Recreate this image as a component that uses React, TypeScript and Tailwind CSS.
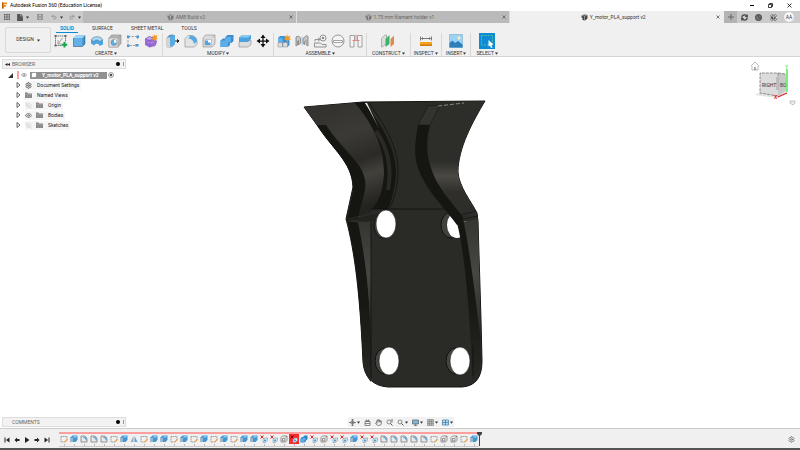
import type { ReactNode } from 'react';
import { CircleHelp, Clock, Eye, EyeOff, Hand, Redo2, RefreshCw, Settings, Undo2 } from 'lucide-react';

type Feature = 'sketch' | 'extrude' | 'fillet' | 'mirror' | 'cut' | 'failed' | 'shell' | 'combine';

const TIMELINE: Feature[] = [
  'sketch', 'extrude', 'fillet', 'fillet', 'fillet', 'sketch', 'extrude', 'mirror', 'sketch', 'extrude',
  'extrude', 'sketch', 'extrude', 'sketch', 'extrude', 'sketch', 'extrude', 'sketch', 'extrude', 'extrude',
  'cut', 'cut', 'shell', 'failed', 'combine', 'cut', 'shell', 'cut', 'cut', 'extrude',
  'cut', 'cut', 'fillet', 'fillet', 'fillet', 'fillet', 'fillet', 'sketch', 'shell', 'shell',
  'sketch', 'extrude',
];

const TREE = [
  { label: 'Document Settings', icon: 'gear', eye: '' },
  { label: 'Named Views', icon: 'folder', eye: '' },
  { label: 'Origin', icon: 'folder', eye: 'off' },
  { label: 'Bodies', icon: 'folder', eye: 'on' },
  { label: 'Sketches', icon: 'folder', eye: 'off' },
];

const Caret = () => (
  <svg viewBox="0 0 4 4" className="size-[3px] shrink-0" fill="#333"><path d="M0 .5h4L2 3.5z" /></svg>
);

const DocIcon = ({ color }: { color: string }) => (
  <svg viewBox="0 0 14 14" className="size-[7px] shrink-0">
    <path d="M1 3l5-2 7 1v7l-5 4-5-1V8L1 7z" fill={color} />
    <path d="M2 3l5 1v8M7 4l6-2" stroke="#ddd" fill="none" />
  </svg>
);

const Svg = ({ children }: { children: ReactNode }) => (
  <svg viewBox="0 0 28 28" className="size-[14px]" fill="none" strokeLinejoin="round">{children}</svg>
);

const Cube = ({ x = 0, y = 0 }: { x?: number; y?: number }) => (
  <g transform={`translate(${x} ${y})`}>
    <path d="M2 8l5-5h18v17l-5 5H2z" fill="#3a8fd0" />
    <path d="M2 8h18v17H2z" fill="#62b0e8" />
    <path d="M2 8l5-5h18l-5 5z" fill="#a5d5f5" />
  </g>
);

const TOOLS: Record<string, ReactNode> = {
  'Create Sketch': (
    <Svg>
      <path d="M3 4h20M3 4v19M23 4v12M3 23h13" stroke="#555" strokeWidth="1.5" strokeDasharray="3 1" />
      <path d="M8 20l9-12M8 12v8h7" stroke="#888" strokeWidth="1.5" />
      <path d="M1 2h4v4H1zM21 2h4v4h-4zM1 21h4v4H1z" fill="#666" />
      <path d="M21 16v11M15.500 21.500h11" stroke="#16a34a" strokeWidth="4" />
    </Svg>
  ),
  Extrude: <Svg><Cube x={1} /><path d="M3 8v17h18l5-5V3" stroke="#555" /></Svg>,
  Revolve: (
    <Svg>
      <path d="M2 12c4-9 20-9 24 0v9l-7 3c0-6-9-6-11-1l-6-4z" fill="#4ba3e0" />
      <path d="M2 12c4-9 20-9 24 0l-7 3c-2-4-9-4-11 0z" fill="#a9d6f3" stroke="#56748a" />
    </Svg>
  ),
  Hole: (
    <Svg>
      <path d="M2 8l5-6h19v17l-6 7H2z" fill="#b8b8b8" stroke="#777" />
      <path d="M2 8h18v18H2zM20 8l6-6" fill="#e2e2e2" stroke="#888" />
      <circle cx="12" cy="17" r="6" fill="#5caee8" stroke="#777" /><path d="M12 11a6 6 0 0 1 5 7l-5-1z" fill="#fff" />
    </Svg>
  ),
  Pattern: (
    <Svg>
      <path d="M4 5h19M4 5v18h17M23 5v6" stroke="#888" strokeWidth="1.500" strokeDasharray="5 2" />
      <path d="M2 3h5v5H2zM21 3h5v5h-5zM2 21h5v5H2zM19 20h6v5h-6z" fill="#4699d5" />
    </Svg>
  ),
  'Create Form': (
    <Svg>
      <path d="M2 10l8-5 12 2 4 8-3 9-12 3-9-5z" fill="#9b6dd7" />
      <path d="M2 10l8-5 10 3-8 5zM12 13v13M3 17l10 3 12-4" fill="#c3a3ee" stroke="#7546b4" />
      <path d="M21 0l2 4 4-2-2 5 3 3-5 1-1 4-2-4-5 0 3-4-2-4 4 1z" fill="#f79a1c" />
    </Svg>
  ),
  'Press Pull': (
    <Svg>
      <path d="M2 7l6-5h8v19l-5 5H2z" fill="#4a9fdd" stroke="#666" /><path d="M2 7h9v19H2z" fill="#d5d5d5" />
      <path d="M8 7l5-5h5v18l-5 5H8z" fill="#58aae5" /><path d="M18 14h7M23 11l3 3-3 3z" stroke="#222" fill="#222" strokeWidth="2" />
    </Svg>
  ),
  Fillet: (
    <Svg>
      <path d="M2 9l6-6h6c7 0 12 5 12 12v6l-6 5H2z" fill="#e4e4e4" stroke="#777" />
      <path d="M8 9l5-6c7 0 13 5 13 12l-6 5c0-6-5-11-12-11z" fill="#55a9e4" />
    </Svg>
  ),
  Shell: (
    <Svg>
      <path d="M2 8l5-6h19v18l-6 6H2z" fill="#ddd" stroke="#777" /><path d="M6 11h13v11H6z" fill="#fff" stroke="#999" />
      <path d="M6 13h6v4h5v5H6z" fill="#4da4e2" /><path d="M20 8l6-6" stroke="#999" />
    </Svg>
  ),
  Combine: (
    <Svg>
      <path d="M1 13l5-4h5V6l4-4h12v12l-4 4h-3v4l-4 4H1z" fill="#398ecf" />
      <path d="M1 13h9V6h12v11h-6v9H1z" fill="#5aade7" />
    </Svg>
  ),
  'Offset Face': (
    <Svg>
      <path d="M2 17l6-4h18v8l-6 5H2z" fill="#ddd" stroke="#777" />
      <path d="M2 7l6-5h18v8l-6 6H2z" fill="#4ca2df" /><path d="M2 7l6-5h18l-6 5z" fill="#8cc8f0" />
    </Svg>
  ),
  'Move/Copy': (
    <Svg>
      <path d="M14 5v18M5 14h18" stroke="#111" strokeWidth="2.500" />
      <path d="M14 1l5 7H9zM14 27l5-7H9zM1 14l7-5v10zM27 14l-7-5v10z" fill="#111" />
    </Svg>
  ),
  'New Component': (
    <Svg>
      <path d="M2 8l4-4h9l10 9v9l-4 4H2z" fill="#3b91d2" />
      <path d="M2 8h9v9H2z" fill="#62b2eb" /><path d="M2 17h9v9H2zM12 17h9v9h-9z" fill="#ddd" stroke="#888" />
      <path d="M20 0l2 5 5-2-2 5 3 3-5 1-2 4-2-4-5-1 3-4-2-4 4 2z" fill="#f79a1c" />
    </Svg>
  ),
  Joint: (
    <Svg>
      <path d="M2 6l5-2 4 4v10l-4 4v-9l-2 1v8l-3 2z" fill="#c9c9c9" stroke="#777" strokeWidth="1.500" />
      <path d="M16 9l7-6 3 2v19l-4-3v-8l-3 3v5l-3-2z" fill="#c5c5c5" stroke="#777" strokeWidth="1.500" />
      <path d="M14 5v18" stroke="#5ba8dc" />
    </Svg>
  ),
  'As-built Joint': (
    <Svg>
      <path d="M3 18h12l3 3h8v5H3zM4 11h9M10 8l4 3-4 3M4 11v4" fill="#eee" stroke="#777" strokeWidth="1.500" />
      <circle cx="20" cy="8" r="6" fill="#eee" stroke="#777" strokeWidth="1.500" /><circle cx="20" cy="8" r="2" fill="#666" />
    </Svg>
  ),
  'Rigid Group': (
    <Svg>
      <circle cx="14" cy="14" r="12" fill="#f4f4f4" stroke="#777" strokeWidth="1.500" />
      <path d="M5 13h18v4H5z" fill="#fff" stroke="#888" strokeWidth="1.500" />
    </Svg>
  ),
  'Drive Joints': (
    <Svg>
      <path d="M2 3h9v9h-1v14H2zM26 3h-9v9h1v14h8z" fill="#f3f3f3" stroke="#888" strokeWidth="1.500" />
      <path d="M14 1v11M7 13h14" stroke="#e16d6d" strokeWidth="1.500" />
    </Svg>
  ),
  'Offset Plane': (
    <Svg>
      <path d="M1 9l7-7h3v17l-8 7H1z" fill="#ddd" stroke="#777" />
      <path d="M9 10l8-8v18l-8 6z" fill="#39b36b" /><path d="M19 10l7-7v17l-7 6z" fill="#e28a4d" />
    </Svg>
  ),
  Measure: (
    <Svg>
      <path d="M3 5v8M25 5v8M5 9h18M8 7l-3 2 3 2M20 7l3 2-3 2" stroke="#555" strokeWidth="1.500" />
      <path d="M2 16h24v7H2z" fill="#f6a21d" /><path d="M2 21h24v3H2z" fill="#cf7b10" />
    </Svg>
  ),
  Decal: (
    <Svg>
      <path d="M1 1h26v26H1z" fill="#9bd3f7" stroke="#6b9fc0" />
      <path d="M1 27V18l6-5 5 5 6-4 9 7v6z" fill="#2c7fb9" /><circle cx="20" cy="8" r="3" fill="#fff1a8" />
    </Svg>
  ),
  Select: (
    <svg viewBox="0 0 32 32" className="size-4">
      <path d="M0 0h32v32H0z" fill="#0d8bd4" />
      <path d="M5 5h22v19H5z" fill="none" stroke="#66cf84" strokeWidth="1.500" strokeDasharray="4 2" />
      <path d="M19 14l10 9-4 1 2 5-3 1-2-5-3 2z" fill="#fff" />
    </svg>
  ),
};

const GROUPS = [
  { label: 'CREATE', pad: 'pl-0.5 pr-1', tools: ['Create Sketch', 'Extrude', 'Revolve', 'Hole', 'Pattern', 'Create Form'] },
  { label: 'MODIFY', pad: 'px-[3px]', tools: ['Press Pull', 'Fillet', 'Shell', 'Combine', 'Offset Face', 'Move/Copy'] },
  { label: 'ASSEMBLE', pad: 'px-[3px]', tools: ['New Component', 'Joint', 'As-built Joint', 'Rigid Group', 'Drive Joints'] },
  { label: 'CONSTRUCT', pad: 'px-[5px]', tools: ['Offset Plane'] },
  { label: 'INSPECT', pad: 'px-[3px]', tools: ['Measure'] },
  { label: 'INSERT', pad: 'px-1', tools: ['Decal'] },
  { label: 'SELECT', pad: 'px-[5px]', tools: ['Select'] },
];

function FeatureIcon({ kind }: { kind: Feature }) {
  return (
    <svg viewBox="0 0 16 16" className="size-2" fill="none">
      {kind === 'sketch' && (
        <>
          <path d="M2 3h12v8M2 3v11h7" stroke="#888" strokeWidth="1.500" strokeDasharray="3 1" />
          <path d="M8 14l6-6 1 2-5 5z" fill="#f5952d" />
        </>
      )}
      {kind === 'extrude' && (
        <>
          <path d="M1 5l4-4h10v9l-4 4H1z" fill="#3f97d8" />
          <path d="M5 5l3-3h7l-3 3z" fill="#8ac7ef" /><path d="M1 6h5v8H1z" fill="#a5b4bf" />
        </>
      )}
      {kind === 'fillet' && (
        <>
          <path d="M2 2h5c4 0 7 3 7 7v5H2z" fill="#e9e9e9" stroke="#777" strokeWidth="1.500" />
          <path d="M6 3c5 0 8 3 8 8l-3-1c0-3-2-4-5-5z" fill="#59a9df" />
        </>
      )}
      {kind === 'mirror' && (
        <><path d="M7 2v12H1z" fill="#aaa" /><path d="M9 2v12h6z" fill="#4da4df" /></>
      )}
      {(kind === 'cut' || kind === 'failed') && (
        <>
          <path d="M1 1l6 6M7 1L1 7" stroke={kind === 'failed' ? '#8b0000' : '#e02828'} strokeWidth="2" />
          <path d="M6 9l3-3h6v5l-4 4H6z" fill="#d5e5ef" stroke="#6f8595" /><circle cx="10" cy="11" r="2" fill="#3c96d6" />
        </>
      )}
      {kind === 'shell' && (
        <path d="M2 5l3-3h9v9l-3 3H2zM5 7h5v5H5zM11 5l3-3" fill="#eee" stroke="#777" strokeWidth="1.500" />
      )}
      {kind === 'combine' && (
        <><path d="M1 7l3-3h2l3-3h6v7l-3 3v1l-3 3H1z" fill="#2c82c5" /><path d="M1 7h5V5h5v5H9v4H1z" fill="#5cade5" /></>
      )}
    </svg>
  );
}

function TitleBar() {
  return (
    <header className="flex h-[11px] items-center bg-white pl-0.5 text-black">
      <svg viewBox="0 0 12 14" className="mr-[3px] h-[7px] w-[5px]">
        <path d="M0 0h12v4H5v2h5v4H5v4H0z" fill="#f28c1c" /><path d="M0 0h3v14H0z" fill="#b95a0b" />
      </svg>
      <h1 className="flex-1 text-[5px] leading-none">Autodesk Fusion 360 (Education License)</h1>
      <div className="flex items-center gap-[14px] pr-2">
        <button aria-label="Minimize" className="h-px w-1 bg-black" />
        <button aria-label="Restore" className="size-[5px]">
          <svg viewBox="0 0 10 10" fill="none" stroke="#000" strokeWidth="1.500"><path d="M1 3h6v6H1zM3 3V1h6v6H7" /></svg>
        </button>
        <button aria-label="Close" className="size-[5px]">
          <svg viewBox="0 0 10 10" stroke="#000" strokeWidth="1.500"><path d="M1 1l8 8M9 1L1 9" /></svg>
        </button>
      </div>
    </header>
  );
}

function DocumentTab({ label, active }: { label: string; active?: boolean }) {
  return (
    <div className={`flex flex-1 items-center border-r pr-[3px] ${active ? 'border-[#f0f0f0] bg-[#f0f0f0] text-[#333]' : 'border-[#ddd] bg-[#bababa] text-[#666]'}`}>
      <button className="flex flex-1 items-center justify-center gap-0.5 leading-none">
        <DocIcon color={active ? '#444' : '#777'} />
        {label}
      </button>
      <button aria-label={`Close ${label}`} className="size-1">
        <svg viewBox="0 0 8 8" stroke="#555" strokeWidth="1.500"><path d="M1 1l6 6M7 1L1 7" /></svg>
      </button>
    </div>
  );
}

function TabBar() {
  return (
    <nav className="flex h-3 bg-[#cbcbcb] text-[5px] text-[#444]">
      <div className="flex w-[83px] items-center pl-1">
        <button aria-label="Data panel" className="mr-[7px]">
          <svg viewBox="0 0 12 12" className="size-1.5" fill="#555">
            <path d="M0 0h3v3H0zM4.500 0h3v3h-3zM9 0h3v3H9zM0 4.500h3v3H0zM4.500 4.500h3v3h-3zM9 4.500h3v3H9zM0 9h3v3H0zM4.500 9h3v3h-3zM9 9h3v3H9z" />
          </svg>
        </button>
        <button aria-label="File" className="mr-2 flex items-center gap-[3px]">
          <svg viewBox="0 0 10 12" className="h-[7px] w-1.5" fill="#555"><path d="M0 0h6v4h4v8H0zM7 0l3 3H7z" /></svg>
          <Caret />
        </button>
        <button aria-label="Save" className="mr-2">
          <svg viewBox="0 0 12 12" className="size-1.5" fill="none" stroke="#888" strokeWidth="1.500"><path d="M1 1h10v10H1zM3 1v4h6V1M3 11V7h6v4" /></svg>
        </button>
        <button aria-label="Undo" className="mr-1.5 flex items-center gap-[3px]"><Undo2 className="size-1.5 text-[#888]" strokeWidth={3} /><Caret /></button>
        <button aria-label="Redo" className="flex items-center gap-[3px]"><Redo2 className="size-1.5 text-[#888]" strokeWidth={3} /><Caret /></button>
      </div>
      <DocumentTab label="AM8 Build v2" />
      <DocumentTab label="1.75 mm filament holder v1" />
      <DocumentTab label="Y_motor_PLA_support v2" active />
      <button aria-label="New design" className="flex w-[13px] items-center justify-center bg-[#b3b3b3]">
        <svg viewBox="0 0 12 12" className="size-1.5" stroke="#666" strokeWidth="2"><path d="M6 0v12M0 6h12" /></svg>
      </button>
      <div className="flex w-[63px] items-center justify-between pr-1.5 pl-1">
        <button aria-label="Extensions"><RefreshCw className="size-[7px]" strokeWidth={4} /></button>
        <button aria-label="Job status"><Clock className="size-[7px] rounded-full bg-[#777]" strokeWidth={3} /></button>
        <button aria-label="Help"><CircleHelp className="size-[7px] rounded-full bg-[#444] text-white" strokeWidth={3} /></button>
        <button className="size-2.5 rounded-full bg-[#f3f3f3] leading-none">AA</button>
      </div>
    </nav>
  );
}

function Toolbar() {
  return (
    <section className="flex h-[34px] border-b border-[#d5d5d5] bg-[#f0f0f0] text-[5px] text-[#333]">
      <button className="mt-1 ml-[5px] flex h-[26px] w-[46px] items-center justify-center gap-[3px] rounded-xs border border-[#d8d8d8]">
        DESIGN <Caret />
      </button>
      <div className="pl-px">
        <div className="ml-1 flex h-2.5 items-end gap-2.5 leading-none">
          <button className="h-[9px] border-b border-[#0a8ad2] px-1 font-bold text-[#0a8ad2]">SOLID</button>
          <button className="h-[9px] border-b border-transparent px-1">SURFACE</button>
          <button className="h-[9px] border-b border-transparent px-1">SHEET METAL</button>
          <button className="h-[9px] border-b border-transparent px-1">TOOLS</button>
        </div>
        <div className="flex h-[23px]">
          {GROUPS.map(group => (
            <div key={group.label} className={`flex flex-col items-center border-r border-[#d9d9d9] last:border-0 ${group.pad}`}>
              <div className="flex h-4 items-center gap-1">
                {group.tools.map(tool => <button key={tool} aria-label={tool}>{TOOLS[tool]}</button>)}
              </div>
              <button className="flex items-center gap-px pt-0.5 leading-none">{group.label} <Caret /></button>
            </div>
          ))}
        </div>
      </div>
    </section>
  );
}

const PanelTitle = ({ label, arrow }: { label: string; arrow?: boolean }) => (
  <div className="flex h-2.5 w-[124px] items-center border border-[#ddd] bg-[#f2f2f2] text-[5px] leading-none text-[#666]">
    <svg viewBox="0 0 10 6" className="ml-[2px] h-[3px] w-[5px]" fill="#222">{arrow && <path d="M5 0v6L0 3zM10 0v6L5 3z" />}</svg>
    <h2 className="ml-[2px] flex-1">{label}</h2>
    <button aria-label={`${label} options`} className="mr-[3px] size-1 rounded-full bg-black" />
    <span className="mr-px h-1 w-px bg-[#999]" />
  </div>
);

const Folder = () => (
  <svg viewBox="0 0 14 12" className="h-1.5 w-[7px]"><path d="M0 1h5l1 2h8v9H0z" fill="#888" /><path d="M0 5h14M5 5v7M10 5v7" stroke="#aaa" /></svg>
);

function Browser() {
  return (
    <aside className="flex flex-col items-start text-[5px] leading-none text-[#222]">
      <PanelTitle label="BROWSER" arrow />
      <div className="mt-px ml-1.5 flex h-2.5 items-center">
        <svg viewBox="0 0 12 12" className="size-[5px]" fill="#333"><path d="M12 0v12H0z" /></svg>
        <span className="mr-0.5 ml-1 h-2 w-0.5 bg-[#f9a0a0]" />
        <Eye className="mr-[3px] size-1.5 text-[#666]" strokeWidth={2} />
        <button className="flex h-[7px] w-[77px] items-center bg-[#919191] pl-px font-bold text-white">
          <svg viewBox="0 0 12 12" className="mr-[5px] size-1.5"><path d="M1 3l3-2h7v8l-3 2H1z" fill="#fff" stroke="#777" /></svg>
          Y_motor_PLA_support v2
        </button>
        <svg viewBox="0 0 12 12" className="ml-px size-1.5" fill="none" stroke="#444"><circle cx="6" cy="6" r="5" /><circle cx="6" cy="6" r="2" fill="#222" /></svg>
      </div>
      <ul className="ml-3.5">
        {TREE.map(node => (
          <li key={node.label} className="flex h-2.5 items-center">
            <svg viewBox="0 0 10 12" className="mr-1 h-1.5 w-[5px]" fill="#fff" stroke="#333" strokeWidth="1.500"><path d="M2 1v10l6-5z" /></svg>
            <button className="flex h-[9px] items-center gap-1 bg-[#f5f5f5] pr-0.5">
              {node.eye === 'on' && <Eye className="size-[7px] text-[#444]" strokeWidth={2} />}
              {node.eye === 'off' && <EyeOff className="size-[7px] text-[#ccc]" strokeWidth={2} />}
              {node.icon === 'gear' ? <Settings className="size-[7px] text-[#555]" strokeWidth={3} /> : <Folder />}
              <span className="pl-px">{node.label}</span>
            </button>
          </li>
        ))}
      </ul>
    </aside>
  );
}

function MotorSupport() {
  return (
    <svg viewBox="300 95 190 295" className="h-[295px] w-[190px]" role="img" aria-label="Y motor support body" strokeLinejoin="round">
      <defs>
        <linearGradient id="left" x1="0" y1="0" x2="0.2" y2="1">
          <stop offset="0" stopColor="#31302d" /><stop offset=".35" stopColor="#3b3a36" />
          <stop offset=".6" stopColor="#2b2a27" /><stop offset=".74" stopColor="#43413c" /><stop offset="1" stopColor="#24231f" />
        </linearGradient>
        <linearGradient id="right" x1="0" y1="0" x2="0" y2="1">
          <stop offset="0" stopColor="#2d2d2a" /><stop offset=".5" stopColor="#2d2d29" />
          <stop offset=".62" stopColor="#4b4944" /><stop offset=".75" stopColor="#302f2c" /><stop offset="1" stopColor="#2b2b28" />
        </linearGradient>
        <linearGradient id="side" x1="0" y1="0" x2="0" y2="1">
          <stop offset="0" stopColor="#353532" /><stop offset=".45" stopColor="#464642" /><stop offset="1" stopColor="#282825" />
        </linearGradient>
        <linearGradient id="edge" x1="0" y1="0" x2="0" y2="1">
          <stop offset="0" stopColor="#151512" /><stop offset=".5" stopColor="#171714" /><stop offset="1" stopColor="#272724" />
        </linearGradient>
      </defs>
      <path
        d="M304 107L363 102 485 101C473 121 458 148 458 172C459 187 471 201 477 213L478 221 481 320 482 361C482 377 476 386 462 387H388C373 386 364 377 363 362C360 295 355 252 346 219L353 187C352 162 333 150 317 125z"
        fill="#2a2a27" stroke="#141412" strokeWidth="1"
      />
      <path d="M304 107L316 106 329 125H317z" fill="#34332f" />
      <path d="M316 106L355 103C373 124 385 148 384 175C383 190 378 201 372 210L371 214 358 218C361 203 367 188 364 177C362 161 343 149 326 125z" fill="url(#left)" />
      <path d="M317 125H326C340 149 362 161 365 180C367 192 360 204 358 219L347 220 353 191C354 165 336 153 317 125z" fill="#151512" />
      <path d="M355 103L364 102C379 122 397 147 396 175C395 188 392 200 388 209H372C379 201 383 190 384 175C385 148 373 124 355 103z" fill="#151512" />
      <path d="M376 131C388 148 392 168 388 190" stroke="#2a2926" strokeWidth="4" fill="none" />
      <path d="M365 103L367 103 380 131C376 123 371 112 365 103z" fill="#efefef" />
      <path d="M369 103C386 127 398 147 398 171C398 187 394 200 389 209" fill="none" stroke="#121210" strokeWidth=".8" />
      <path d="M371 209H456" stroke="#0f0f0d" strokeWidth=".8" fill="none" />
      <ellipse cx="383" cy="225" rx="9" ry="13" fill="#41413c" stroke="#111" />
      <ellipse cx="386" cy="224" rx="10" ry="14" fill="#fff" stroke="#111" strokeWidth=".6" />
      <ellipse cx="451" cy="225" rx="10" ry="13" fill="#41413c" stroke="#111" />
      <ellipse cx="457" cy="225" rx="10" ry="13" fill="#fff" />
      <ellipse cx="385" cy="361" rx="10" ry="13" fill="#45453f" stroke="#111" />
      <ellipse cx="389" cy="361" rx="10" ry="14" fill="#fff" stroke="#111" strokeWidth=".6" />
      <ellipse cx="456" cy="361" rx="10" ry="13" fill="#45453f" stroke="#111" />
      <ellipse cx="460" cy="361" rx="10" ry="14" fill="#fff" stroke="#111" strokeWidth=".6" />
      <path d="M430 106L440 105 485 101C473 121 458 148 458 172C459 187 471 201 477 213L478 219 463 222C447 200 427 185 427 157L430 125z" fill="url(#right)" />
      <path d="M428 106L440 105 430 125H418z" fill="#34332f" stroke="#161614" strokeWidth=".6" />
      <path d="M438 106L464 103" stroke="#aaa" strokeDasharray="4 2" strokeWidth=".7" />
      <path d="M418 125H430C426 139 426 155 431 168C437 187 449 199 463 217V224L457 225C442 204 421 186 416 160C414 148 416 138 418 125z" fill="#151512" />
      <path d="M463 222L478 219 479 260 481 340C475 300 470 256 463 222z" fill="url(#side)" />
      <path d="M457 223L463 219C470 250 475 295 480 335L481 362C480 371 477 378 472 382L471 347C468 295 464 250 457 223z" fill="url(#edge)" />
      <path d="M461 215L476 211M463 219L478 216" stroke="#151513" strokeWidth=".8" />
      <path d="M347 220L358 222C365 255 369 290 371 335V382C366 376 364 370 363 362C360 295 355 252 347 220z" fill="url(#edge)" />
      <path d="M358 216L371 213 376 215V221L371 222H358z" fill="#22221f" />
      <path d="M358 222H371V335C369 290 365 255 358 222z" fill="url(#side)" />
      <path d="M348 219L358 217 374 213M348 221L358 222H373" fill="none" stroke="#3c3b36" strokeWidth=".6" />
      <path d="M371 222V378M473 376V345" stroke="#0f0f0d" strokeWidth=".8" />
    </svg>
  );
}

function ViewCube() {
  return (
    <svg viewBox="0 0 52 48" className="mt-0.5 h-12 w-[52px]" role="img" aria-label="View cube">
      <path d="M3 5l4-4 4 4M4 5v4h6V5" fill="none" stroke="#aaa" strokeWidth=".8" /><path d="M7 6v3" stroke="#555" />
      <path d="M7 34l23 3 9-6-22-2z" fill="#e2e2e2" />
      <path d="M12 12h18v23l-18-3z" fill="#dcdcdc" /><path d="M30 12l8 1v17l-8 5z" fill="#c8c8c8" />
      <path d="M28 16h3v13h-3z" fill="#aaa" opacity=".6" />
      <path d="M30 35l-18-3V12h18v4M30 12l8 1" fill="none" stroke="#777" strokeDasharray="3 1" strokeWidth=".8" />
      <text x="14" y="26" fontSize="5" fill="#333">RIGHT</text>
      <text x="32" y="26" fontSize="5" fill="#444">BO</text>
      <path d="M39 8v23" stroke="#24e424" strokeWidth="1.200" /><path d="M39 32l-9 4" stroke="#e02020" strokeWidth="1.200" />
      <text x="37" y="8" fontSize="5" fill="#24e424">Y</text>
      <text x="26" y="38" fontSize="5" fontWeight="700" fill="#e02020">X</text>
      <path d="M42 40h5v2l-2 2-3-2z" fill="#eee" stroke="#aaa" strokeWidth=".7" />
    </svg>
  );
}

function NavBar() {
  const lens = <><circle cx="6" cy="6" r="4" /><path d="M9 9l4 4" strokeWidth="2" /></>;
  const items = [
    { label: 'Orbit', caret: true, icon: <><ellipse cx="7" cy="7" rx="4" ry="3" /><path d="M7 0v14M0 7h14M5 2l2-2 2 2M5 12l2 2 2-2" /></> },
    { label: 'Look at', icon: <><path d="M2 5h10v8H2zM4 5V2h2v3M8 5V2h2v3M2 9h10" /></> },
    { label: 'Pan', icon: null },
    { label: 'Zoom', icon: <>{lens}<path d="M12 1v6M10 3l2-2 2 2" /></> },
    { label: 'Fit', caret: true, icon: lens },
    { label: 'Display settings', caret: true, icon: <><path d="M1 2h12v8H1z" fill="#80b7dc" /><path d="M4 13h6M7 10v3" /></> },
    { label: 'Grid and snaps', caret: true, icon: <path d="M1 1h12v12H1zM1 5h12M1 9h12M5 1v12M9 1v12" fill="#bbb" stroke="#888" /> },
    { label: 'Viewports', caret: true, icon: <path d="M1 2h12v10H1zM7 2v10M1 7h12" fill="#b4dcf7" stroke="#356f9d" /> },
  ];
  return (
    <div className="flex h-2.5 items-center gap-1 bg-[#f2f2f2] px-px">
      {items.map(item => (
        <button key={item.label} aria-label={item.label} className="flex items-center gap-px">
          {item.icon
            ? <svg viewBox="0 0 14 14" className="size-[7px]" fill="none" stroke="#555" strokeWidth="1.300">{item.icon}</svg>
            : <Hand className="size-[7px] text-[#444]" strokeWidth={2} />}
          {item.caret && <Caret />}
        </button>
      ))}
    </div>
  );
}

function Timeline() {
  const controls = [
    ['Go to start', 'M1 1h2v10H1zM11 1v10L4 6z'],
    ['Step back', 'M1 6l5-5v3h5v4H6v3z'],
    ['Play', 'M2 0l9 6-9 6z'],
    ['Step forward', 'M11 6L6 1v3H1v4h5v3z'],
    ['Go to end', 'M9 1h2v10H9zM1 1v10l7-5z'],
  ];
  return (
    <footer className="flex h-5 items-center border-t border-[#ccc] bg-[#f0f0f0] pt-0.5">
      <div className="flex w-[59px] gap-1 pl-1">
        {controls.map(([label, d]) => (
          <button key={label} aria-label={label}><svg viewBox="0 0 12 12" className="size-1.5" fill="#222"><path d={d} /></svg></button>
        ))}
      </div>
      <div className="flex">
        <ol className="flex border-t-2 border-[#fa9e9e]">
          {TIMELINE.map((kind, i) => (
            <li key={i} className="flex w-2.5 flex-col items-center border-b border-[#c9c9c9]">
              <button aria-label={kind} className={`flex size-2.5 items-center justify-center ${kind === 'failed' ? 'bg-[#f82a2a]' : ''}`}>
                <FeatureIcon kind={kind} />
              </button>
              <span className="h-0.5 w-px bg-[#bbb]" />
            </li>
          ))}
        </ol>
        <svg viewBox="0 0 10 28" className="-ml-0.5 h-3.5 w-[5px]"><path d="M0 0h10v4L6 8v20H4V8L0 4z" fill="#444" /></svg>
      </div>
      <button aria-label="Timeline settings" className="mr-[5px] ml-auto"><Settings className="size-[7px] text-[#555]" strokeWidth={2} /></button>
    </footer>
  );
}

export default function App() {
  return (
    <div className="flex min-h-screen flex-col bg-white font-['Roboto',sans-serif]">
      <TitleBar />
      <TabBar />
      <Toolbar />
      <main className="flex flex-1 flex-col pt-0.5">
        <div className="grid flex-1 grid-cols-[1fr_auto_1fr] pl-0.5">
          <Browser />
          <div className="flex items-center pt-2 pr-3"><MotorSupport /></div>
          <div className="flex flex-col items-end"><ViewCube /></div>
        </div>
        <div className="grid grid-cols-[1fr_auto_1fr] pb-px pl-0.5">
          <PanelTitle label="COMMENTS" />
          <NavBar />
        </div>
      </main>
      <Timeline />
      <div className="h-0.5 bg-[#555]" />
    </div>
  );
}
